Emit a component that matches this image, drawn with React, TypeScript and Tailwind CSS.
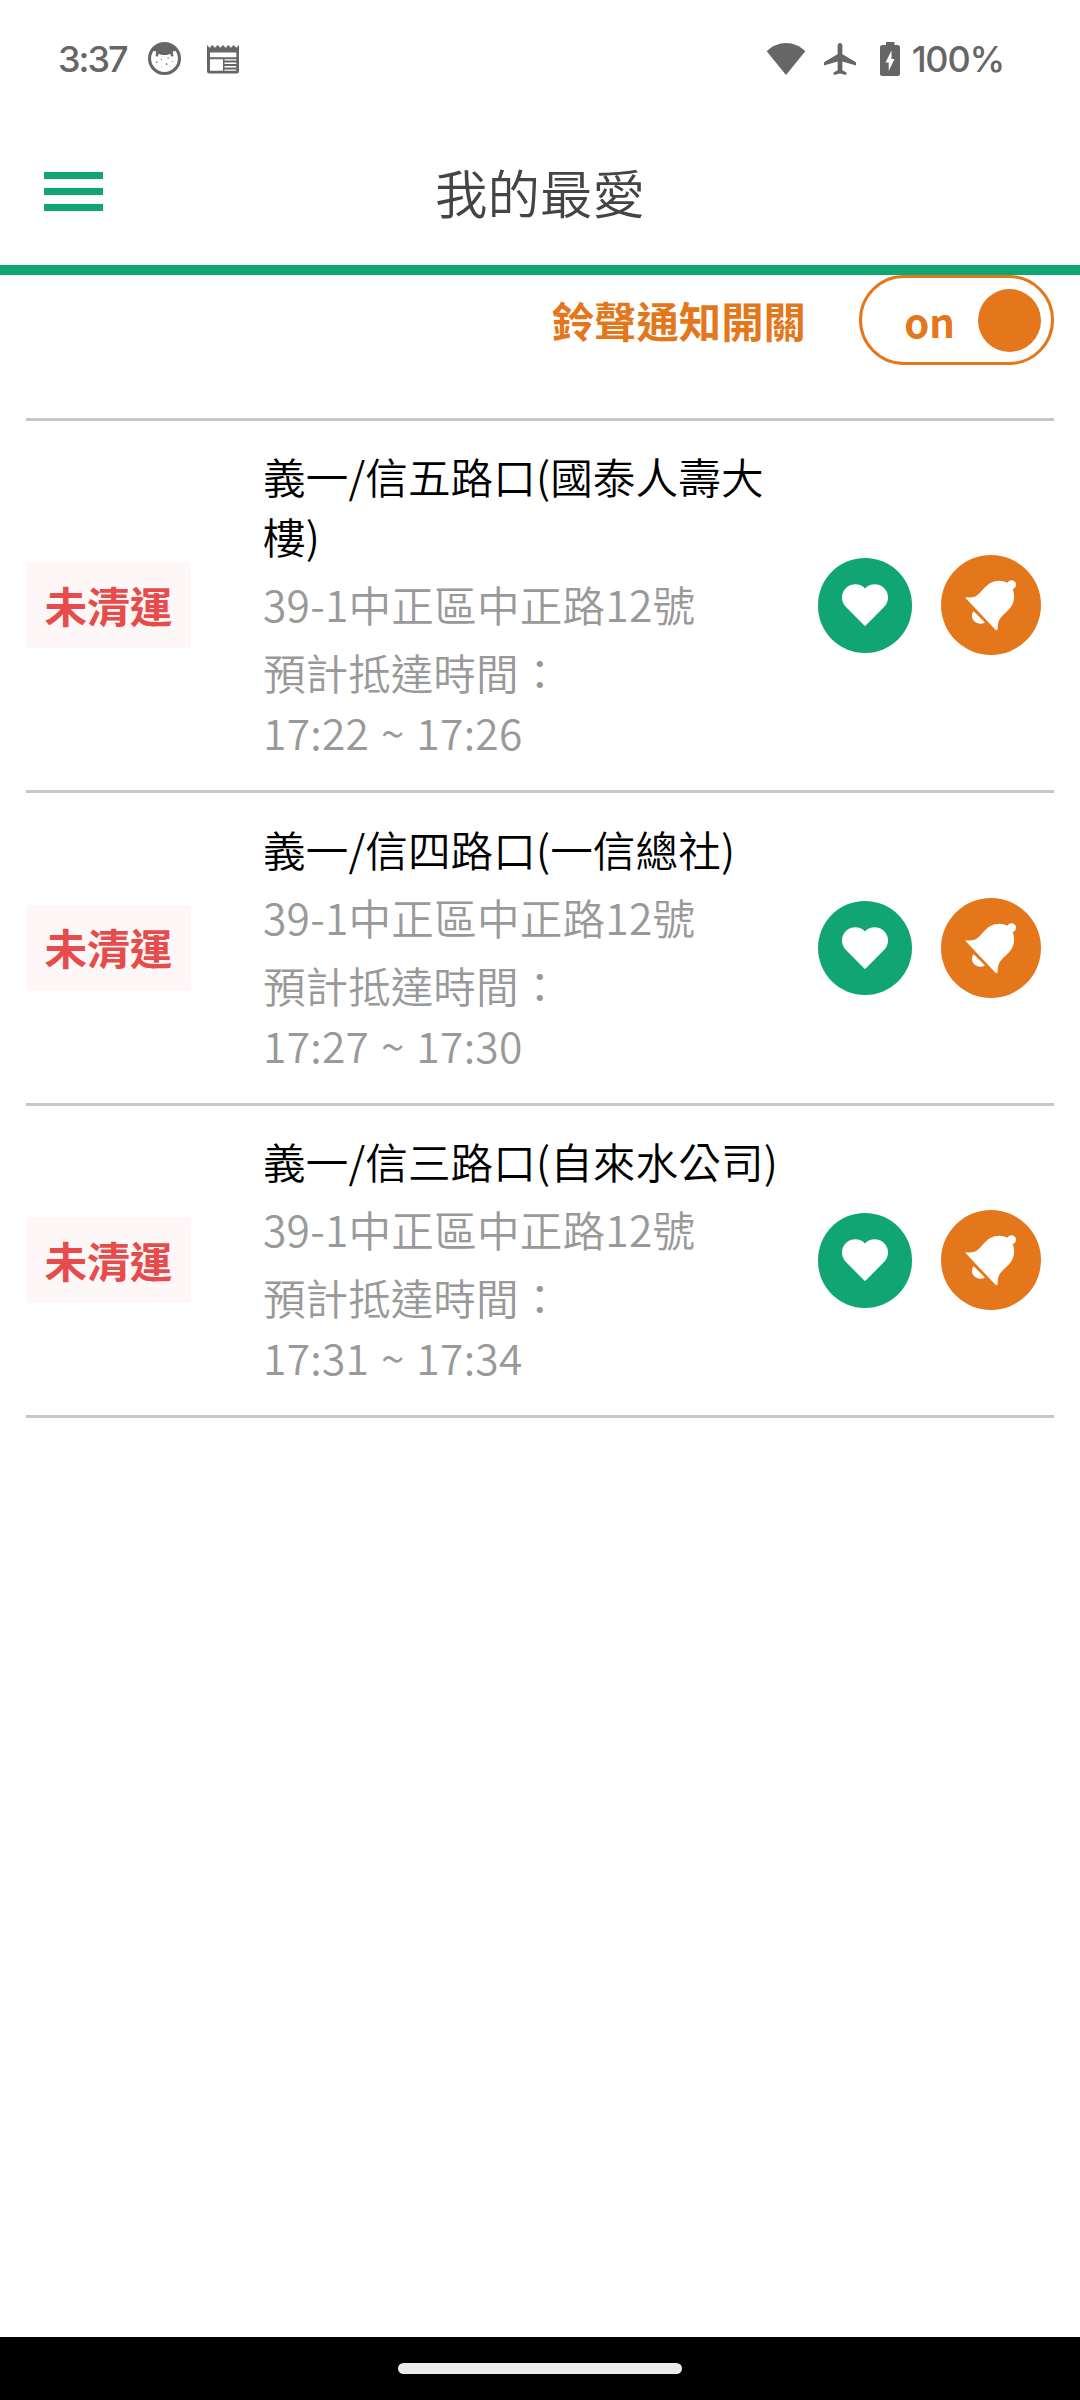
import React from 'react';

const stops = [
  { name: '義一/信五路口(國泰人壽大樓)', address: '39-1中正區中正路12號', time: '17:22 ~ 17:26' },
  { name: '義一/信四路口(一信總社)', address: '39-1中正區中正路12號', time: '17:27 ~ 17:30' },
  { name: '義一/信三路口(自來水公司)', address: '39-1中正區中正路12號', time: '17:31 ~ 17:34' },
];

const FaceIcon = () => (
  <svg className="w-[33px] h-[33px]" viewBox="0 0 32 32" fill="none">
    <circle cx="16" cy="16" r="14.5" stroke="#666" strokeWidth="3" />
    <path d="M4 8.500C7 3 11 1 16 1s9 2 12 7.500l-4 .8.7 4.600-2.300.2-.8-2.800c-1.600.8-2.600 1.300-5.600 1.300s-4-.5-5.600-1.300l-.8 2.800-2.300-.2.7-4.600z" fill="#666" />
    <g fill="#666">
      <circle cx="13" cy="17" r=".6" />
      <circle cx="19.500" cy="15.500" r=".7" />
      <circle cx="8.500" cy="19.500" r=".8" />
      <circle cx="23.500" cy="19" r=".5" />
      <circle cx="18" cy="21.500" r=".8" />
      <circle cx="13.500" cy="24" r=".4" />
      <circle cx="21" cy="24" r=".4" />
    </g>
  </svg>
);

const NewsIcon = () => (
  <svg className="w-8 h-[30px]" viewBox="0 0 32 30" fill="#666">
    <path fillRule="evenodd" d="M0 1l2.700 2.700L5.300 1 8 3.700 10.700 1l2.600 2.700L16 1l2.700 2.700L21.300 1 24 3.700 26.700 1l2.600 2.700L32 1v26a2.500 2.500 0 0 1-2.500 2.500h-27A2.500 2.500 0 0 1 0 27zM3 8.500v4.800h26.300v-4.800zM3 15.300v11.400h13V15.300zM17.500 15.300v1.300h11.800v-1.300zM17.500 18.500v1.500h11.800v-1.500zM17.500 22v1.500h11.800V22zM17.500 25.400v1.300h11.800v-1.300z" />
  </svg>
);

const WifiIcon = () => (
  <svg className="w-10 h-8" viewBox="0 0 40 32" fill="#666">
    <path d="M20 32L.7 8.300C6 3 13 0 20 0s14 3 19.300 8.300z" />
  </svg>
);

const PlaneIcon = () => (
  <svg className="w-8 h-8" viewBox="2 2 20 20" fill="#666">
    <path d="M22 16v-2l-8.500-5V3.500c0-.83-.67-1.500-1.500-1.500s-1.500.67-1.500 1.500V9L2 14v2l8.500-2.500V19L8 20.500V22l4-1 4 1v-1.500L13.500 19v-5.500L22 16z" />
  </svg>
);

const BatteryIcon = () => (
  <svg className="w-5 h-[34px]" viewBox="0 0 20 34">
    <path d="M6 0h8.500v3H17.500A2.500 2.500 0 0 1 20 5.500v26a2.500 2.500 0 0 1-2.500 2.500h-15A2.500 2.500 0 0 1 0 31.500v-26A2.500 2.500 0 0 1 2.500 3H6z" fill="#666" />
    <path d="M11.500 8.500v8.500H14.500L8.700 29v-8.500H5.500z" fill="#fff" />
  </svg>
);

const HeartIcon = () => (
  <svg className="w-12 h-[42px]" viewBox="0 0 48 42" fill="#fff">
    <path d="M24 4.500C28.500-.5 37-1.200 42.500 3.500c6 5.500 6 14 .5 19.500L24.700 41.600a1 1 0 0 1-1.400 0L5 23C-.5 17.500-.5 9 5.500 3.500 11-1.200 19.500-.5 24 4.500z" />
  </svg>
);

const BellIcon = () => (
  <svg className="w-[100px] h-[100px]" viewBox="0 0 100 100" fill="#fff">
    <path d="M25.300 42.200c4 .6 7.500.6 10.500-1.600 4.500-3.300 8-9.300 13.500-12.600 5.700-3.200 12-3 17.200-.3a4.500 4.500 0 1 1 5.300 6.300c2.200 6.500 1.700 13-2.300 18.500-3.500 4.700-9.300 8-11.700 13.500-1.200 2.800-.8 5.700-1.300 8.300-.2 1.200-1.200 1.300-2 .5L25 43.500c-.7-.7-.6-1.400.3-1.300z" />
    <path d="M32.700 56.200L44 67.600c-3.500 2.200-8.200 1.400-10.900-1.500-2.700-2.800-2.900-7.100-.4-9.900z" />
  </svg>
);

const StatusBar = () => (
  <header className="flex h-[117px] justify-between pl-[58px] pr-[76px] text-[#666]">
    <div className="flex h-full items-center">
      <span className="w-[90px] font-['Inter'] text-[36px] font-medium leading-none tracking-[-2px]">3:37</span>
      <FaceIcon />
      <div className="ml-[26px]">
        <NewsIcon />
      </div>
    </div>
    <div className="flex h-full items-center">
      <WifiIcon />
      <div className="ml-[18px]">
        <PlaneIcon />
      </div>
      <div className="ml-6">
        <BatteryIcon />
      </div>
      <span className="ml-3 font-['Inter'] text-[36px] font-medium leading-none tracking-[-1.200px]">100%</span>
    </div>
  </header>
);

const App: React.FC = () => {
  return (
    <div className="flex h-[2400px] w-[1080px] flex-col bg-white font-['Noto_Sans_CJK_TC',sans-serif] text-[42.600px] leading-[60px]">
      <StatusBar />
      <nav className="grid h-[158px] grid-cols-[1fr_auto_1fr] items-center border-b-[10px] border-[#10a572] px-11">
        <div className="flex w-[59px] flex-col gap-[9px]">
          <span className="h-[7px] bg-[#10a572]" />
          <span className="h-[7px] bg-[#10a572]" />
          <span className="h-[7px] bg-[#10a572]" />
        </div>
        <h1 className="text-[52.500px] font-[350] text-[#444]">我的最愛</h1>
      </nav>

      <main className="flex-1 px-[26px]">
        <div className="flex h-[142.500px] items-start justify-end text-[#e4771b]">
          <span className="mr-[53px] mt-[15px] text-[42.400px] font-bold">鈴聲通知開關</span>
          <div className="flex h-[90px] w-[195px] items-center justify-end gap-[23px] rounded-full border-[3px] border-[#e4771b] pr-[10px]">
            <span className="pt-0.5 text-[40px] font-bold">on</span>
            <span className="h-[63px] w-[63px] rounded-full bg-[#e4771b]" />
          </div>
        </div>

        <ul className="border-t-[3px] border-[#c6c6ce]">
          {stops.map((stop) => (
            <li key={stop.name} className="flex items-center border-b-[3px] border-[#c6c6ce] py-[26.750px]">
              <div className="flex h-[86px] w-[165px] items-center justify-center bg-[#fdf7f7] pb-px font-bold text-[#e74c4c]">
                未清運
              </div>
              <div className="-mt-px mb-px ml-[72px] w-[530px] font-[350] text-[#999]">
                <h2 className="tracking-[0.100px] text-black">{stop.name}</h2>
                <p className="mt-2 tracking-[0.200px]">{stop.address}</p>
                <p className="mt-2">預計抵達時間：</p>
                <p className="tracking-[0.250px] [word-spacing:2px]">{stop.time}</p>
              </div>
              <button className="ml-[24.500px] flex h-[94.500px] w-[94.500px] items-center justify-center rounded-full bg-[#10a572]">
                <HeartIcon />
              </button>
              <button className="ml-[29px] h-[100px] w-[100px] rounded-full bg-[#e4771b]">
                <BellIcon />
              </button>
            </li>
          ))}
        </ul>
      </main>

      <footer className="flex h-[63px] justify-center bg-black pt-[26px]">
        <div className="h-[11px] w-[284px] rounded-full bg-[#ebebeb]" />
      </footer>
    </div>
  );
};

export default App;
